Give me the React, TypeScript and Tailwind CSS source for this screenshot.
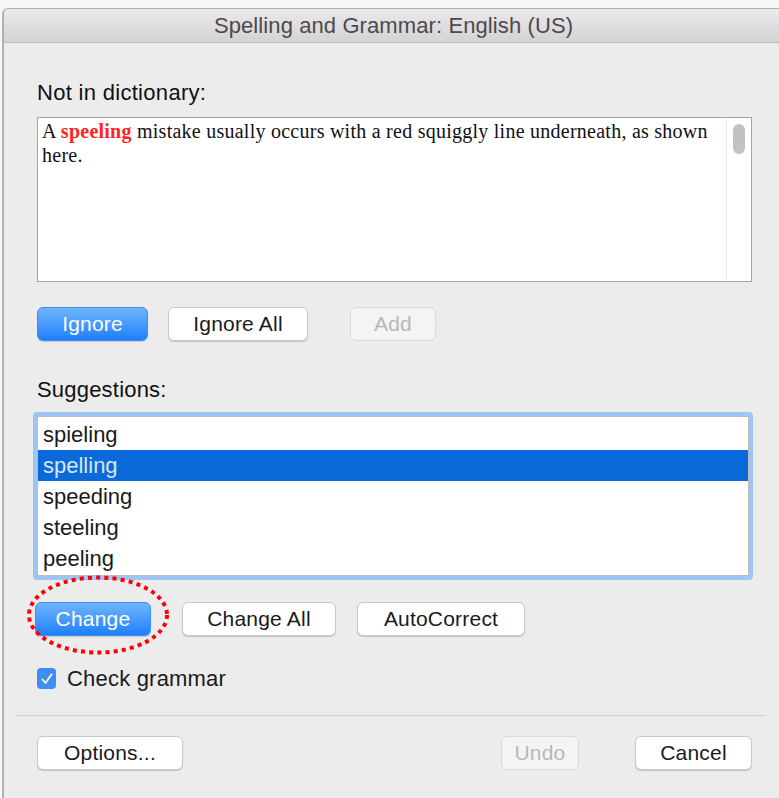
import React from 'react';

const SUGGESTIONS = ['spieling', 'spelling', 'speeding', 'steeling', 'peeling'];

const sans = { fontFamily: '"Liberation Sans", Arial, sans-serif' };

function MacButton({
  label,
  width,
  kind = 'normal',
}: {
  label: string;
  width: string;
  kind?: 'normal' | 'primary' | 'disabled';
}) {
  const base = `h-[34px] ${width} rounded-[6px] text-[21px] tracking-[0.2px] flex items-center justify-center shrink-0`;
  if (kind === 'primary') {
    return (
      <button
        type="button"
        className={`${base} text-white bg-gradient-to-b from-[#6db4fb] to-[#1b7ffb] border border-[#3f8ff2] shadow-[0_1px_1px_rgba(0,0,0,0.15)]`}
      >
        {label}
      </button>
    );
  }
  if (kind === 'disabled') {
    return (
      <button
        type="button"
        className={`${base} text-[#b8b8b8] bg-[#f4f4f4] border border-[#dadada]`}
      >
        {label}
      </button>
    );
  }
  return (
    <button
      type="button"
      className={`${base} text-[#1a1a1a] bg-white border border-[#c8c8c8] shadow-[0_1px_1px_rgba(0,0,0,0.18)]`}
    >
      {label}
    </button>
  );
}

export default function App() {
  return (
    <div className="w-[779px] h-[798px] bg-[#f7f7f7] pt-[8px] pl-[2px] overflow-hidden" style={sans}>
      <div className="h-full bg-[#ececec] border-l-2 border-t border-[#b2b2b2] rounded-tl-[6px] flex flex-col">
        {/* title bar */}
        <div className="h-[34px] shrink-0 bg-gradient-to-b from-[#ebe9eb] to-[#d4d2d4] border-b border-[#bdbdbd] rounded-tl-[5px] flex items-center justify-center">
          <span className="text-[22px] tracking-[0.1px] text-[#4b4b4b] pl-[4px]">Spelling and Grammar: English (US)</span>
        </div>

        <div className="flex-1 flex flex-col pl-[33px] pr-[27px] relative">
          <div className="mt-[37px] h-[26px] text-[22px] tracking-[0.3px] text-[#111] leading-[26px]">Not in dictionary:</div>

          {/* text box */}
          <div className="mt-[11px] h-[165px] bg-white border border-[#a4a4a4] flex">
            <p
              className="flex-1 pl-[4px] pt-[1px] text-[20px] tracking-[0.25px] leading-[24px] text-[#111]"
              style={{ fontFamily: '"Liberation Serif", "Times New Roman", serif' }}
            >
              A <span className="text-[#ff2424] font-bold">speeling</span> mistake usually occurs with a red squiggly line underneath, as shown here.
            </p>
            <div className="w-[25px] shrink-0 border-l border-[#ececec] flex justify-center pt-[6px]">
              <div className="w-[12px] h-[30px] rounded-full bg-[#c2c2c2]" />
            </div>
          </div>

          {/* ignore row */}
          <div className="mt-[25px] flex gap-[20px]">
            <MacButton label="Ignore" width="w-[111px]" kind="primary" />
            <MacButton label="Ignore All" width="w-[140px]" />
            <div className="w-[2px]" />
            <MacButton label="Add" width="w-[86px]" kind="disabled" />
          </div>

          <div className="mt-[36px] h-[26px] text-[22px] tracking-[0.2px] text-[#111] leading-[26px]">Suggestions:</div>

          {/* suggestion list with focus ring */}
          <div className="mt-[9px] -ml-[4px] w-[720px] h-[168px] rounded-[4px] bg-[#9ec6f4] p-[4px]">
            <div className="h-full bg-white border border-[#bcbcbc] flex flex-col pt-[2px]">
              {SUGGESTIONS.map((s, i) => (
                <div
                  key={s}
                  className={`h-[31px] pl-[5px] text-[22px] leading-[31px] ${
                    i === 1 ? 'bg-[#0b69d9] text-[#d9e6fb]' : 'text-[#1a1a1a]'
                  }`}
                >
                  {s}
                </div>
              ))}
            </div>
          </div>

          {/* change row */}
          <div className="mt-[22px] flex gap-[31px] -ml-[2px]">
            <MacButton label="Change" width="w-[116px]" kind="primary" />
            <div className="flex gap-[21px]">
              <MacButton label="Change All" width="w-[154px]" />
              <MacButton label="AutoCorrect" width="w-[168px]" />
            </div>
          </div>

          {/* red dotted highlight */}
          <svg
            className="absolute left-[21px] top-[531px] pointer-events-none"
            width="146"
            height="82"
            viewBox="0 0 146 82"
          >
            <ellipse
              cx="73"
              cy="41"
              rx="69"
              ry="37.5"
              fill="none"
              stroke="#ff0000"
              strokeWidth="4"
              strokeDasharray="4 4.2"
            />
          </svg>

          {/* check grammar */}
          <div className="mt-[26px] flex items-center gap-[11px]">
            <div className="w-[19px] h-[21px] rounded-[4px] bg-[#3c8ff0] flex items-center justify-center">
              <svg width="14" height="14" viewBox="0 0 14 14">
                <path d="M2.5 7.5 L5.5 11 L11.5 2.5" fill="none" stroke="white" strokeWidth="1.8" strokeLinecap="round" strokeLinejoin="round" />
              </svg>
            </div>
            <span className="text-[22px] tracking-[0.2px] text-[#1a1a1a]">Check grammar</span>
          </div>

          {/* separator */}
          <div className="mt-[20px] -ml-[21px] -mr-[13px] h-px bg-[#cfcfcf]" />

          {/* bottom row */}
          <div className="mt-[20px] flex">
            <MacButton label="Options..." width="w-[146px]" />
            <div className="flex-1" />
            <MacButton label="Undo" width="w-[78px]" kind="disabled" />
            <div className="w-[56px]" />
            <MacButton label="Cancel" width="w-[117px]" />
          </div>
        </div>
      </div>
    </div>
  );
}
